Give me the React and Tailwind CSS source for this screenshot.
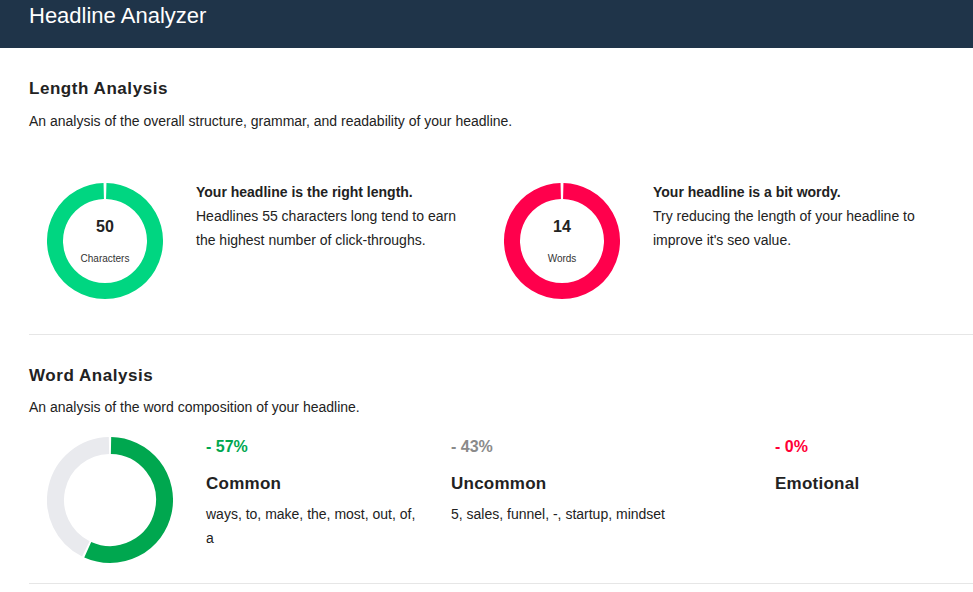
import React from 'react';

// arc path between two fractions of a circle, starting at 12 o'clock, clockwise
const arcPath = (cx, cy, r, from, to) => {
  const a0 = from * 2 * Math.PI - Math.PI / 2;
  const a1 = to * 2 * Math.PI - Math.PI / 2;
  const x0 = cx + r * Math.cos(a0);
  const y0 = cy + r * Math.sin(a0);
  const x1 = cx + r * Math.cos(a1);
  const y1 = cy + r * Math.sin(a1);
  const large = to - from > 0.5 ? 1 : 0;
  return `M ${x0} ${y0} A ${r} ${r} 0 ${large} 1 ${x1} ${y1}`;
};

const LengthDonut = ({ value, label, color }) => (
  <div className="relative mt-[3px] h-[116px] w-[116px] shrink-0">
    <svg width="116" height="116" viewBox="0 0 116 116">
      <path d={arcPath(58, 58, 50, 0.004, 0.996)} fill="none" stroke={color} strokeWidth="16" />
    </svg>
    <div className="absolute inset-0 flex flex-col items-center">
      <span className="mt-[34px] text-base font-bold leading-5 text-[#222]">{value}</span>
      <span className="mt-[16px] text-[10px] leading-3 text-[#333]">{label}</span>
    </div>
  </div>
);

const WordDonut = ({ percent }) => {
  const p = percent / 100;
  return (
    <svg width="126" height="126" viewBox="0 0 126 126" className="mt-[3px] shrink-0">
      <path d={arcPath(63, 63, 54.5, p + 0.003, 0.997)} fill="none" stroke="#e9eaee" strokeWidth="17" />
      <path d={arcPath(63, 63, 54.5, 0.003, p - 0.003)} fill="none" stroke="#00a74f" strokeWidth="17" />
    </svg>
  );
};

const lengthItems = [
  {
    value: 50,
    label: 'Characters',
    color: '#00d681',
    title: 'Your headline is the right length.',
    text: 'Headlines 55 characters long tend to earn the highest number of click-throughs.',
  },
  {
    value: 14,
    label: 'Words',
    color: '#ff004c',
    title: 'Your headline is a bit wordy.',
    text: "Try reducing the length of your headline to improve it's seo value.",
  },
];

const wordGroups = [
  { pct: '- 57%', pctColor: 'text-[#00a74f]', name: 'Common', words: 'ways, to, make, the, most, out, of, a', width: 'w-[245px]', textWidth: 'w-[216px]' },
  { pct: '- 43%', pctColor: 'text-[#8a8a8a]', name: 'Uncommon', words: '5, sales, funnel, -, startup, mindset', width: 'w-[324px]', textWidth: 'w-[300px]' },
  { pct: '- 0%', pctColor: 'text-[#ff0036]', name: 'Emotional', words: '', width: 'w-[180px]', textWidth: 'w-[180px]' },
];

export default function App() {
  return (
    <div className="min-h-screen bg-white font-['Liberation_Sans',Arial,sans-serif] text-[#222]">
      <header className="h-12 bg-[#1f3449] px-[29px]">
        <h1 className="text-[22px] leading-8 text-white">Headline Analyzer</h1>
      </header>

      <main className="pl-[29px]">
        {/* Length */}
        <section className="border-b border-[#e6e6e6] pt-[31px] pb-[35px]">
          <h2 className="text-[17px] font-bold leading-5 tracking-[0.55px]">Length Analysis</h2>
          <p className="mt-[10px] text-sm leading-6 text-[#222]">
            An analysis of the overall structure, grammar, and readability of your headline.
          </p>
          <div className="mt-[47px] flex">
            {lengthItems.map((item) => (
              <div key={item.label} className="flex w-[457px] items-start pl-[18px]">
                <LengthDonut value={item.value} label={item.label} color={item.color} />
                <div className="ml-[33px] w-[270px] text-sm leading-6 text-[#222]">
                  <p className="font-bold">{item.title}</p>
                  <p>{item.text}</p>
                </div>
              </div>
            ))}
          </div>
        </section>

        {/* Words */}
        <section className="border-b border-[#e6e6e6] pt-[31px] pb-[20px]">
          <h2 className="text-[17px] font-bold leading-5 tracking-[0.55px]">Word Analysis</h2>
          <p className="mt-[9px] text-sm leading-6">An analysis of the word composition of your headline.</p>
          <div className="mt-[15px] flex items-start pl-[18px]">
            <WordDonut percent={57} />
            <div className="ml-[33px] flex">
              {wordGroups.map((g) => (
                <div key={g.name} className={g.width}>
                  <p className={`mt-[1px] text-base font-bold leading-6 ${g.pctColor}`}>{g.pct}</p>
                  <h3 className="mt-[13px] text-[17px] font-bold leading-6 tracking-[0.25px] text-[#222]">{g.name}</h3>
                  <p className={`mt-[6px] text-sm leading-6 ${g.textWidth}`}>{g.words}</p>
                </div>
              ))}
            </div>
          </div>
        </section>
      </main>
    </div>
  );
}
